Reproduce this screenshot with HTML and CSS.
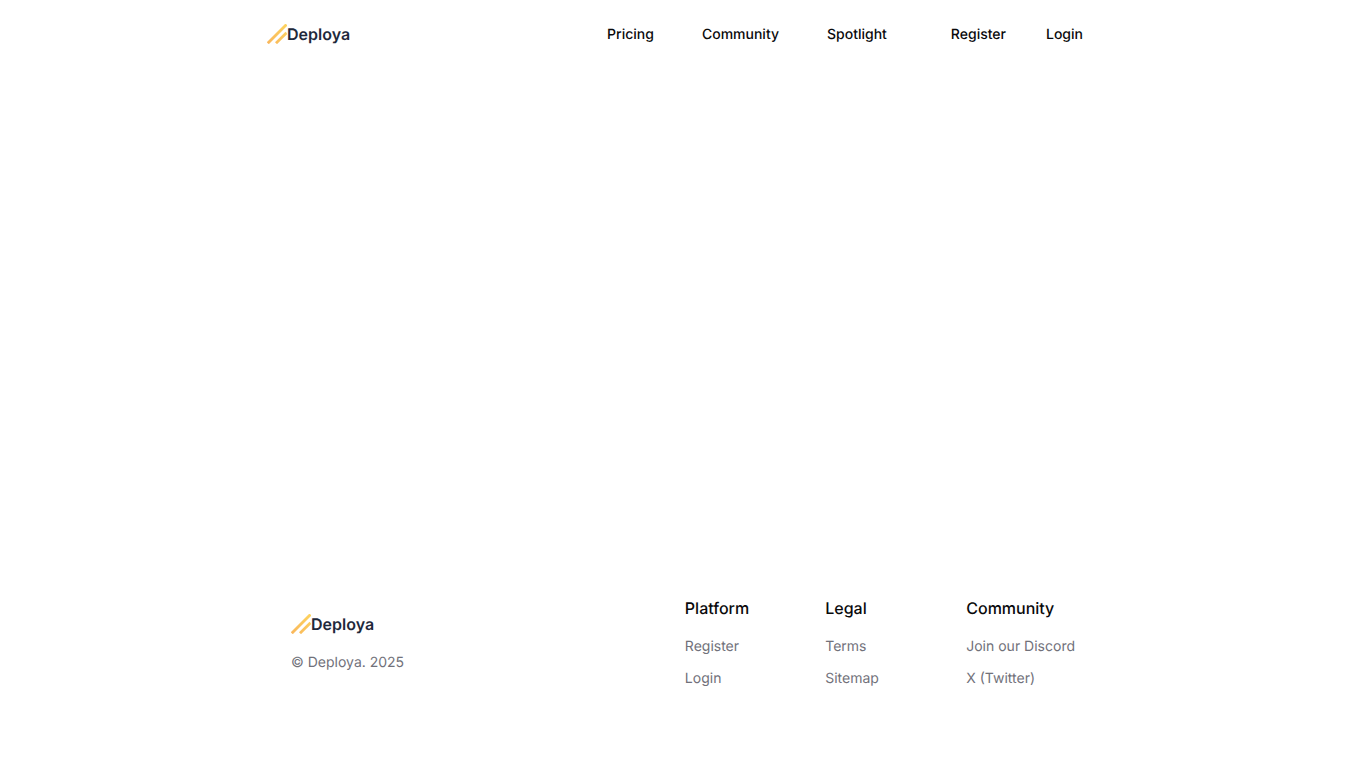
FILE: index.html
```html
<!DOCTYPE html>
<html lang="en">
<head>
<meta charset="utf-8">
<title>Deploya</title>
<link rel="stylesheet" href="styles.css">
</head>
<body>
<div class="page">
  <header class="header">
    <a class="brand" href="#">
      <svg class="mark" viewBox="0 0 20 20" aria-hidden="true">
        <defs><linearGradient id="markfill" gradientUnits="userSpaceOnUse" x1="0" y1="20" x2="20" y2="0"><stop offset="0" stop-color="#f9b65c"/><stop offset="1" stop-color="#fdd45f"/></linearGradient></defs>
        <path d="M0.800 19.200L19.500 0.500" /><path d="M9 19.200L19.500 8.700" />
      </svg>
      <span>Deploya</span>
    </a>
    <nav class="nav">
      <a href="#">Pricing</a>
      <a href="#">Community</a>
      <a href="#">Spotlight</a>
    </nav>
    <div class="auth">
      <a href="#">Register</a>
      <a href="#">Login</a>
    </div>
  </header>
  <main class="main"></main>
  <footer class="footer">
    <div class="about">
      <a class="brand" href="#">
        <svg class="mark" viewBox="0 0 20 20" aria-hidden="true"><path d="M0.800 19.200L19.500 0.500" /><path d="M9 19.200L19.500 8.700" /></svg>
        <span>Deploya</span>
      </a>
      <p class="copy">© Deploya. 2025</p>
    </div>
    <div class="cols">
      <div class="col col-a">
        <h3>Platform</h3>
        <a href="#">Register</a>
        <a href="#">Login</a>
      </div>
      <div class="col col-b">
        <h3>Legal</h3>
        <a href="#">Terms</a>
        <a href="#">Sitemap</a>
      </div>
      <div class="col">
        <h3>Community</h3>
        <a href="#">Join our Discord</a>
        <a href="#">X (Twitter)</a>
      </div>
    </div>
  </footer>
</div>
</body>
</html>
```
FILE: styles.css
```css
* { box-sizing: border-box; }
html, body { margin: 0; padding: 0; background: #fff; }
body { font-family: Inter, "Liberation Sans", sans-serif; color: #09090b; text-rendering: geometricPrecision; }
a { text-decoration: none; color: inherit; }
.page { width: 832px; margin: 0 auto 0 267px; height: 768px; display: flex; flex-direction: column; }
.header { height: 68px; display: flex; align-items: center; font-size: 14px; font-weight: 500; }
.brand { display: flex; align-items: center; font-size: 16px; font-weight: 600; color: #1e293b; }
.mark { width: 20px; height: 20px; fill: none; stroke: url(#markfill); stroke-width: 2.8; display: block; }
.nav { display: flex; gap: 48px; margin-left: 257px; }
.auth { display: flex; gap: 40px; margin-left: 64px; }
.main { flex: 1; }
.footer { height: 200px; padding: 0 24px 0 24px; display: flex; justify-content: space-between; }
.about { padding-top: 46px; }
.copy { margin: 19px 0 0; font-size: 14px; line-height: 20px; color: #71717a; }
.cols { display: flex; padding-top: 28px; }
.col { display: flex; flex-direction: column; align-items: flex-start; font-size: 14px; color: #71717a; }
.col-a { width: 140.4px; }
.col-b { width: 141px; }
.col h3 { margin: 0 0 17px; font-size: 16px; line-height: 24px; font-weight: 500; color: #09090b; }
.col a { line-height: 20px; margin-bottom: 12px; }
```
